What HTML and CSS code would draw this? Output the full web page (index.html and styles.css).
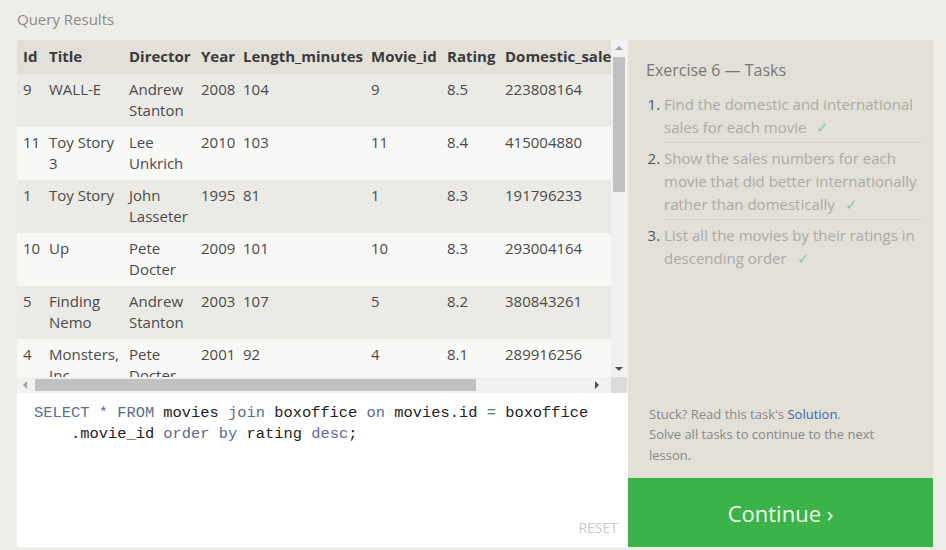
FILE: index.html
```html
<!DOCTYPE html>
<html>
<head>
<meta charset="utf-8">
<link rel="stylesheet" href="styles.css">
</head>
<body>
<div class="page">
  <div class="title">Query Results</div>
  <div class="workspace">
    <div class="left">
      <div class="results">
        <div class="viewport">
          <table class="grid">
            <colgroup>
              <col class="c-id"><col class="c-title"><col class="c-dir"><col class="c-year"><col class="c-len"><col class="c-mid"><col class="c-rat"><col class="c-dom"><col class="c-int">
            </colgroup>
            <thead>
              <tr><th>Id</th><th>Title</th><th>Director</th><th>Year</th><th>Length_minutes</th><th>Movie_id</th><th>Rating</th><th>Domestic_sales</th><th>International_sales</th></tr>
            </thead>
            <tbody>
              <tr><td>9</td><td>WALL-E</td><td>Andrew Stanton</td><td>2008</td><td>104</td><td>9</td><td>8.5</td><td>223808164</td><td>297503696</td></tr>
              <tr><td>11</td><td>Toy Story 3</td><td>Lee Unkrich</td><td>2010</td><td>103</td><td>11</td><td>8.4</td><td>415004880</td><td>648167031</td></tr>
              <tr><td>1</td><td>Toy Story</td><td>John Lasseter</td><td>1995</td><td>81</td><td>1</td><td>8.3</td><td>191796233</td><td>170162503</td></tr>
              <tr><td>10</td><td>Up</td><td>Pete Docter</td><td>2009</td><td>101</td><td>10</td><td>8.3</td><td>293004164</td><td>438338580</td></tr>
              <tr><td>5</td><td>Finding Nemo</td><td>Andrew Stanton</td><td>2003</td><td>107</td><td>5</td><td>8.2</td><td>380843261</td><td>555900000</td></tr>
              <tr><td>4</td><td>Monsters, Inc.</td><td>Pete Docter</td><td>2001</td><td>92</td><td>4</td><td>8.1</td><td>289916256</td><td>272900000</td></tr>
              <tr><td>7</td><td>Ratatouille</td><td>Brad Bird</td><td>2007</td><td>115</td><td>7</td><td>8.0</td><td>206445654</td><td>417277164</td></tr>
            </tbody>
          </table>
        </div>
        <div class="vbar">
          <div class="sbtn"><span class="arr up"></span></div>
          <div class="vtrack"><div class="vthumb"></div></div>
          <div class="sbtn"><span class="arr down"></span></div>
        </div>
        <div class="hbar">
          <div class="sbtn"><span class="arr left"></span></div>
          <div class="htrack"><div class="hthumb"></div></div>
          <div class="sbtn"><span class="arr right"></span></div>
        </div>
        <div class="corner"></div>
      </div>
      <div class="editor">
        <div class="code"><span class="kw">SELECT</span> <span class="kw">*</span> <span class="kw">FROM</span> movies <span class="kw">join</span> boxoffice <span class="kw">on</span> movies.id <span class="kw">=</span> boxoffice</div>
        <div class="code wrap">.movie_id <span class="kw">order</span> <span class="kw">by</span> rating <span class="kw">desc</span>;</div>
        <div class="reset">RESET</div>
      </div>
    </div>
    <div class="right">
      <div class="tasks">
        <div class="ex-title">Exercise 6 — Tasks</div>
        <ol class="task-list">
          <li>Find the domestic and international sales for each movie <span class="check">✓</span></li>
          <li>Show the sales numbers for each movie that did better internationally rather than domestically <span class="check">✓</span></li>
          <li>List all the movies by their ratings in descending order <span class="check">✓</span></li>
        </ol>
        <div class="stuck">
          <p>Stuck? Read this task's <span class="link">Solution</span>.</p>
          <p>Solve all tasks to continue to the next lesson.</p>
        </div>
      </div>
      <div class="continue">Continue ›</div>
    </div>
  </div>
</div>
</body>
</html>
```
FILE: styles.css
```css
* { box-sizing: border-box; }
html, body { margin: 0; padding: 0; }
body {
  background: #efede7;
  font-family: "Open Sans", "Noto Sans", sans-serif;
  color: #333;
}
.page {
  padding: 6px 13px 3px 17px;
}
.title {
  height: 34px;
  line-height: 26px;
  font-size: 15px;
  color: #8a8a8a;
}
.workspace {
  display: flex;
  height: 507px;
}
.left {
  width: 611px;
  display: flex;
  flex-direction: column;
}
.results {
  display: grid;
  grid-template-columns: 594px 16px;
  grid-template-rows: 337px 16px;
  height: 353px;
  background: #f1f1f1;
}
.viewport {
  overflow: hidden;
  background: #f7f7f5;
}
.grid {
  table-layout: fixed;
  width: 762px;
  border-collapse: collapse;
  font-size: 15px;
}
.c-id { width: 26px; }
.c-title { width: 80px; }
.c-dir { width: 72px; }
.c-year { width: 42px; }
.c-len { width: 128px; }
.c-mid { width: 76px; }
.c-rat { width: 58px; }
.c-dom { width: 130px; }
.c-int { width: 150px; }
.grid th {
  text-align: left;
  font-weight: 700;
  color: #3a3a3a;
  background: #e2e0d9;
  line-height: 21px;
  padding: 6px 3px 7px 6px;
  white-space: nowrap;
  overflow: hidden;
}
.grid td {
  vertical-align: top;
  color: #4a4a4a;
  line-height: 21px;
  height: 53px;
  padding: 5px 3px 6px 6px;
}
.grid tbody tr:nth-child(odd) td { background: #ebeae4; }
.grid tbody tr:nth-child(even) td { background: #f8f8f6; }

.vbar {
  display: flex;
  flex-direction: column;
  background: #f1f1f1;
}
.hbar {
  display: flex;
  background: #f1f1f1;
}
.corner { background: #dcdcdc; }
.sbtn {
  width: 16px;
  height: 16px;
  flex: none;
  display: flex;
  align-items: center;
  justify-content: center;
}
.vtrack { flex: 1; padding: 1px 2px 0 2px; }
.vthumb { height: 135px; background: #c1c1c1; }
.htrack { flex: 1; padding: 2px 0 2px 2px; }
.hthumb { width: 441px; height: 12px; background: #c1c1c1; }
.arr { width: 0; height: 0; border: 4px solid transparent; }
.arr.up { border-bottom-color: #a3a3a3; border-top-width: 0; }
.arr.down { border-top-color: #505050; border-bottom-width: 0; }
.arr.left { border-right-color: #a3a3a3; border-left-width: 0; }
.arr.right { border-left-color: #505050; border-right-width: 0; }

.editor {
  flex: 1;
  background: #fff;
  padding: 10px 10px 0 17px;
  display: flex;
  flex-direction: column;
  font-family: "Liberation Mono", "DejaVu Sans Mono", monospace;
  font-size: 15.4px;
  color: #222;
}
.code {
  line-height: 21px;
  white-space: pre;
}
.code.wrap { padding-left: 37px; }
.kw { color: #5b6c90; }
.reset {
  margin-top: auto;
  align-self: flex-end;
  font-family: "Open Sans", "Noto Sans", sans-serif;
  font-size: 14px;
  color: #c9c9c9;
  line-height: 20px;
  padding-bottom: 9px;
}

.right {
  width: 305px;
  display: flex;
  flex-direction: column;
}
.tasks {
  flex: 1;
  background: #e2e0d7;
  padding: 18px 10px 0 18px;
  display: flex;
  flex-direction: column;
}
.ex-title {
  font-size: 16px;
  line-height: 24px;
  color: #777;
}
.task-list {
  margin: 11px 0 0 0;
  padding: 0 0 0 18px;
  font-size: 15px;
  line-height: 23px;
  color: #ababa6;
}
.task-list li {
  padding: 0 0 3px 0;
  margin-bottom: 0;
}
.task-list li::marker { color: #555; }
.task-list li + li {
  border-top: 1px solid #d5d3ca;
  padding-top: 4px;
}
.check {
  color: #8fc89a;
  margin-left: 6px;
}
.stuck {
  margin-top: auto;
  padding: 0 25px 13px 3px;
  font-size: 13px;
  line-height: 20.5px;
  color: #888;
}
.stuck p { margin: 0; }
.link { color: #3f63b8; }
.continue {
  height: 69px;
  background: #3bb34a;
  color: #eaffe9;
  font-size: 22px;
  display: flex;
  align-items: center;
  justify-content: center;
}
```
